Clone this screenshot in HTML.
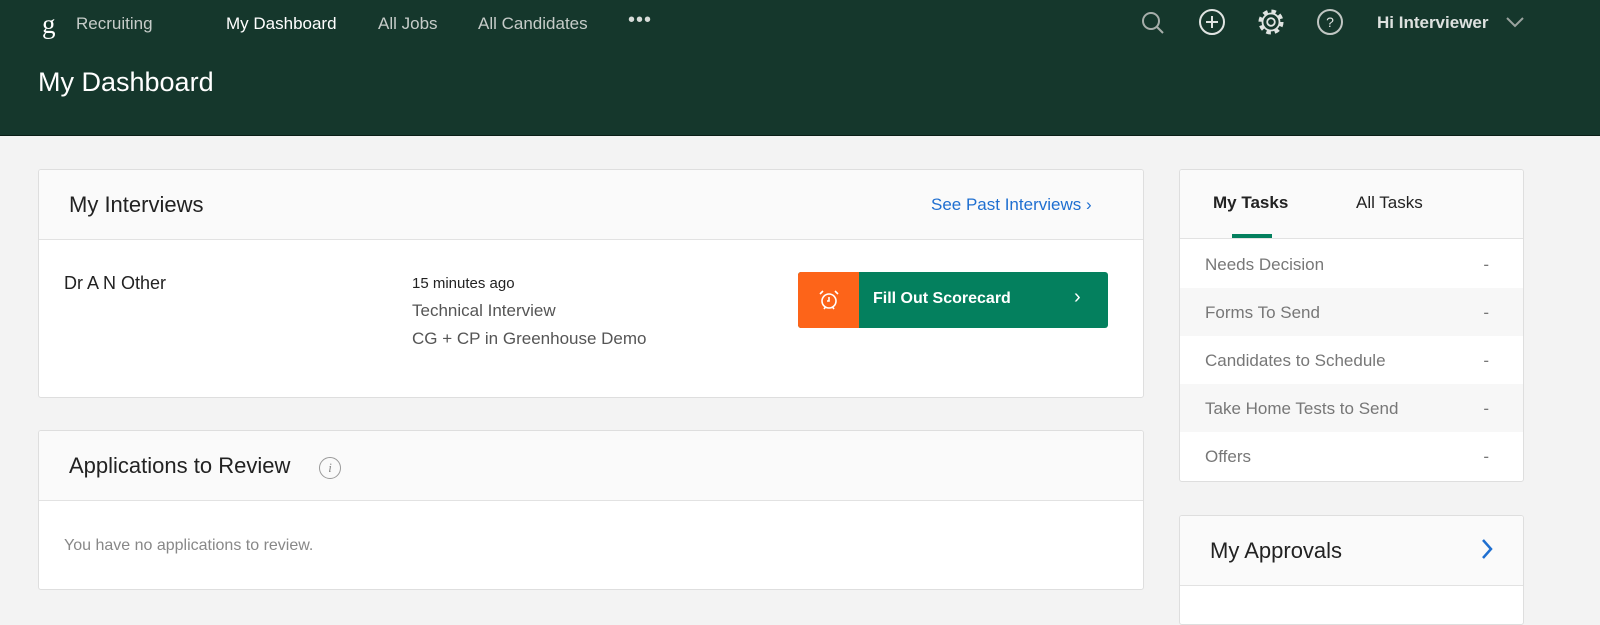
<!DOCTYPE html>
<html><head><meta charset="utf-8"><style>
*{margin:0;padding:0;box-sizing:border-box}
body{width:1600px;height:614px;overflow:hidden;background:#f3f3f3;font-family:"Liberation Sans",sans-serif;color:#222;position:relative}
.hdr{position:absolute;left:0;top:0;width:1600px;height:136px;background:#15372c;border-bottom:1px solid #0a1e17}
.t{position:absolute;white-space:nowrap}
.card{position:absolute;background:#fff;border:1px solid #dedede;border-radius:3px;overflow:hidden}
.ch{position:absolute;left:0;top:0;right:0;background:#fafafa;border-bottom:1px solid #e2e2e2}
.row{position:absolute;left:0;right:0;height:48px;font-size:17px;color:#777}
.row span{position:absolute;left:25px;top:15px}
.row b{position:absolute;right:34px;top:15px;font-weight:normal}
</style></head><body>
<div class="hdr">
<div class="t" style="left:42px;top:9px;font-size:27px;color:#fff;font-family:'Liberation Serif',serif">g</div>
<div class="t" style="left:76px;top:14px;font-size:17px;color:#c6ccc9">Recruiting</div>
<div class="t" style="left:226px;top:14px;font-size:17px;color:#fff">My Dashboard</div>
<div class="t" style="left:378px;top:14px;font-size:17px;color:#c6ccc9">All Jobs</div>
<div class="t" style="left:478px;top:14px;font-size:17px;color:#c6ccc9">All Candidates</div>
<div class="t" style="left:628px;top:9px;font-size:20px;color:#d6dbd8;letter-spacing:1px">•••</div>
<svg class="t" style="left:1140px;top:10px" width="26" height="26" viewBox="0 0 26 26" fill="none" stroke="#a6aeaa" stroke-width="2"><circle cx="11" cy="11" r="8"/><path d="M17 17l6 6"/></svg>
<svg class="t" style="left:1198px;top:8px" width="28" height="28" viewBox="0 0 28 28" fill="none" stroke="#e0e4e2" stroke-width="2"><circle cx="14" cy="14" r="12"/><path d="M14 8v12M8 14h12"/></svg>
<svg class="t" style="left:1257px;top:8px" width="28" height="28" viewBox="0 0 28 28" fill="none" stroke="#e0e4e2"><circle cx="14" cy="14" r="8.5" stroke-width="1.8"/><circle cx="14" cy="14" r="10.8" stroke-width="3.5" stroke-dasharray="4.6 3.9"/><circle cx="14" cy="14" r="3.8" stroke-width="1.8"/></svg>
<svg class="t" style="left:1316px;top:8px" width="28" height="28" viewBox="0 0 28 28" fill="none" stroke="#c0c6c3" stroke-width="2"><circle cx="14" cy="14" r="12"/><text x="14" y="19" font-size="14" fill="#e0e4e2" stroke="none" text-anchor="middle" font-family="Liberation Sans">?</text></svg>
<div class="t" style="left:1377px;top:13px;font-size:17px;font-weight:bold;color:#dde1df">Hi Interviewer</div>
<svg class="t" style="left:1505px;top:16px" width="20" height="12" viewBox="0 0 20 12" fill="none" stroke="#9aa39f" stroke-width="2"><path d="M2 2l8 8 8-8"/></svg>
<div class="t" style="left:38px;top:67px;font-size:27px;color:#fff">My Dashboard</div>
</div>

<div class="card" style="left:38px;top:169px;width:1106px;height:229px">
<div class="ch" style="height:70px"></div>
<div class="t" style="left:30px;top:22px;font-size:22px">My Interviews</div>
<div class="t" style="left:892px;top:25px;font-size:17px;color:#1f6fd0">See Past Interviews ›</div>
<div class="t" style="left:25px;top:103px;font-size:18px">Dr A N Other</div>
<div class="t" style="left:373px;top:105px;font-size:15px">15 minutes ago</div>
<div class="t" style="left:373px;top:131px;font-size:17px;color:#555">Technical Interview</div>
<div class="t" style="left:373px;top:159px;font-size:17px;color:#555">CG + CP in Greenhouse Demo</div>
<div class="t" style="left:759px;top:102px;width:310px;height:56px;background:#04805e;border-radius:3px;overflow:hidden">
<div style="position:absolute;left:0;top:0;width:61px;height:56px;background:#fd6419"></div>
<svg style="position:absolute;left:19px;top:16px" width="24" height="24" viewBox="0 0 24 24" fill="none" stroke="#fff" stroke-width="1.6"><circle cx="12" cy="13" r="7"/><path d="M12 9v4h-2M3 6l3-3M21 6l-3-3M7 21l1.5-2M17 21l-1.5-2"/></svg>
<div style="position:absolute;left:75px;top:18px;font-size:16px;font-weight:bold;color:#fff">Fill Out Scorecard</div>
<div style="position:absolute;left:276px;top:14px;font-size:20px;color:#fff">›</div>
</div>
</div>

<div class="card" style="left:38px;top:430px;width:1106px;height:160px">
<div class="ch" style="height:70px"></div>
<div class="t" style="left:30px;top:22px;font-size:22px">Applications to Review</div>
<div class="t" style="left:280px;top:26px;width:22px;height:22px;border:1.5px solid #999;border-radius:50%;font-size:13px;color:#888;text-align:center;line-height:19px;font-style:italic;font-family:'Liberation Serif',serif">i</div>
<div class="t" style="left:25px;top:106px;font-size:16px;color:#888">You have no applications to review.</div>
</div>

<div class="card" style="left:1179px;top:169px;width:345px;height:313px">
<div class="ch" style="height:69px"></div>
<div class="t" style="left:33px;top:23px;font-size:17px;font-weight:bold">My Tasks</div>
<div class="t" style="left:52px;top:64px;width:40px;height:4px;background:#04805e"></div>
<div class="t" style="left:176px;top:23px;font-size:17px">All Tasks</div>
<div class="row" style="top:70px"><span>Needs Decision</span><b>-</b></div>
<div class="row" style="top:118px;background:#f7f7f7"><span>Forms To Send</span><b>-</b></div>
<div class="row" style="top:166px"><span>Candidates to Schedule</span><b>-</b></div>
<div class="row" style="top:214px;background:#f7f7f7"><span>Take Home Tests to Send</span><b>-</b></div>
<div class="row" style="top:262px"><span>Offers</span><b>-</b></div>
</div>

<div class="card" style="left:1179px;top:515px;width:345px;height:110px">
<div class="ch" style="height:70px"></div>
<div class="t" style="left:30px;top:22px;font-size:22px">My Approvals</div>
<svg class="t" style="left:300px;top:22px" width="14" height="22" viewBox="0 0 14 22" fill="none" stroke="#1f6fd0" stroke-width="2.5"><path d="M3 2l8 9-8 9"/></svg>
</div>
</body></html>
